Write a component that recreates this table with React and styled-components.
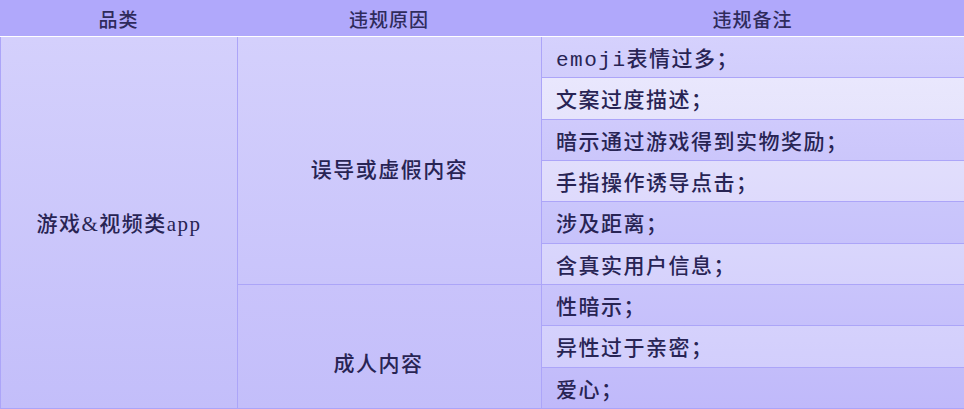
import React from 'react';
import styled, { createGlobalStyle } from 'styled-components';

const GlobalStyle = createGlobalStyle`
  html, body {
    margin: 0;
    padding: 0;
    background: #ffffff;
  }
  body {
    font-family: "Liberation Serif", "Noto Sans CJK SC", serif;
    color: #282454;
  }
`;

const Table = styled.div`
  width: 964px;
  height: 409px;
  display: flex;
  flex-direction: column;
  overflow: hidden;
`;

const HeaderRow = styled.div`
  display: grid;
  grid-template-columns: 237px 304px 1fr;
  height: 36px;
  background: #b0a8fb;
  border-bottom: 1px solid #ffffff;
`;

const HeaderCell = styled.div`
  display: flex;
  align-items: center;
  justify-content: center;
  font-size: 19px;
  font-weight: 500;
  letter-spacing: 1px;
  color: #2f2b5c;
`;

const Body = styled.div`
  flex: 1;
  display: grid;
  grid-template-columns: 237px 304px 1fr;
  grid-template-rows: repeat(9, 1fr);
`;

const SpanCell = styled.div`
  grid-column: ${(p) => p.col};
  grid-row: ${(p) => p.rows};
  box-sizing: border-box;
  border-left: 1px solid #aca5f8;
  border-bottom: 1px solid #aca5f8;
  background: linear-gradient(${(p) => p.from}, ${(p) => p.to});
  display: flex;
  align-items: center;
  justify-content: center;
  padding-top: ${(p) => p.offset || 0}px;
  padding-right: ${(p) => p.shift || 0}px;
  font-size: 21px;
  font-weight: 500;
  letter-spacing: 1.5px;
`;

const NoteCell = styled.div`
  grid-column: 3;
  box-sizing: border-box;
  border-left: 1px solid #aca5f8;
  border-bottom: 1px solid #aca5f8;
  background: linear-gradient(${(p) => p.bg}, ${(p) => p.bg2});
  display: flex;
  align-items: center;
  padding-left: 14px;
  font-family: "Liberation Mono", "Noto Sans CJK SC", monospace;
  font-size: 21px;
  font-weight: 500;
  letter-spacing: 1.5px;
`;

const notes = [
  ['emoji表情过多；', '#d5d1fd', '#d1cdfc'],
  ['文案过度描述；', '#e9e7fd', '#e6e4fc'],
  ['暗示通过游戏得到实物奖励；', '#cfcafc', '#cbc6fb'],
  ['手指操作诱导点击；', '#e1defc', '#dedafc'],
  ['涉及距离；', '#cac6fb', '#c7c2fb'],
  ['含真实用户信息；', '#d9d6fc', '#d6d2fc'],
  ['性暗示；', '#c9c4fb', '#c6c0fb'],
  ['异性过于亲密；', '#d5d1fc', '#d2cefc'],
  ['爱心；', '#c3bdfa', '#c0b9fa'],
];

function App() {
  return (
    <>
      <GlobalStyle />
      <Table>
        <HeaderRow>
          <HeaderCell>品类</HeaderCell>
          <HeaderCell>违规原因</HeaderCell>
          <HeaderCell>违规备注</HeaderCell>
        </HeaderRow>
        <Body>
          <SpanCell col={1} rows="1 / span 9" from="#d4d0fc" to="#c3befa">
            游戏&amp;视频类app
          </SpanCell>
          <SpanCell col={2} rows="1 / span 6" from="#d4d0fc" to="#c9c4fb" offset={16}>
            误导或虚假内容
          </SpanCell>
          <SpanCell col={2} rows="7 / span 3" from="#c9c3fb" to="#c3befa" offset={32} shift={22}>
            成人内容
          </SpanCell>
          {notes.map(([text, bg, bg2], i) => (
            <NoteCell key={i} bg={bg} bg2={bg2} style={{ gridRow: i + 1 }}>
              {text}
            </NoteCell>
          ))}
        </Body>
      </Table>
    </>
  );
}

export default App;
